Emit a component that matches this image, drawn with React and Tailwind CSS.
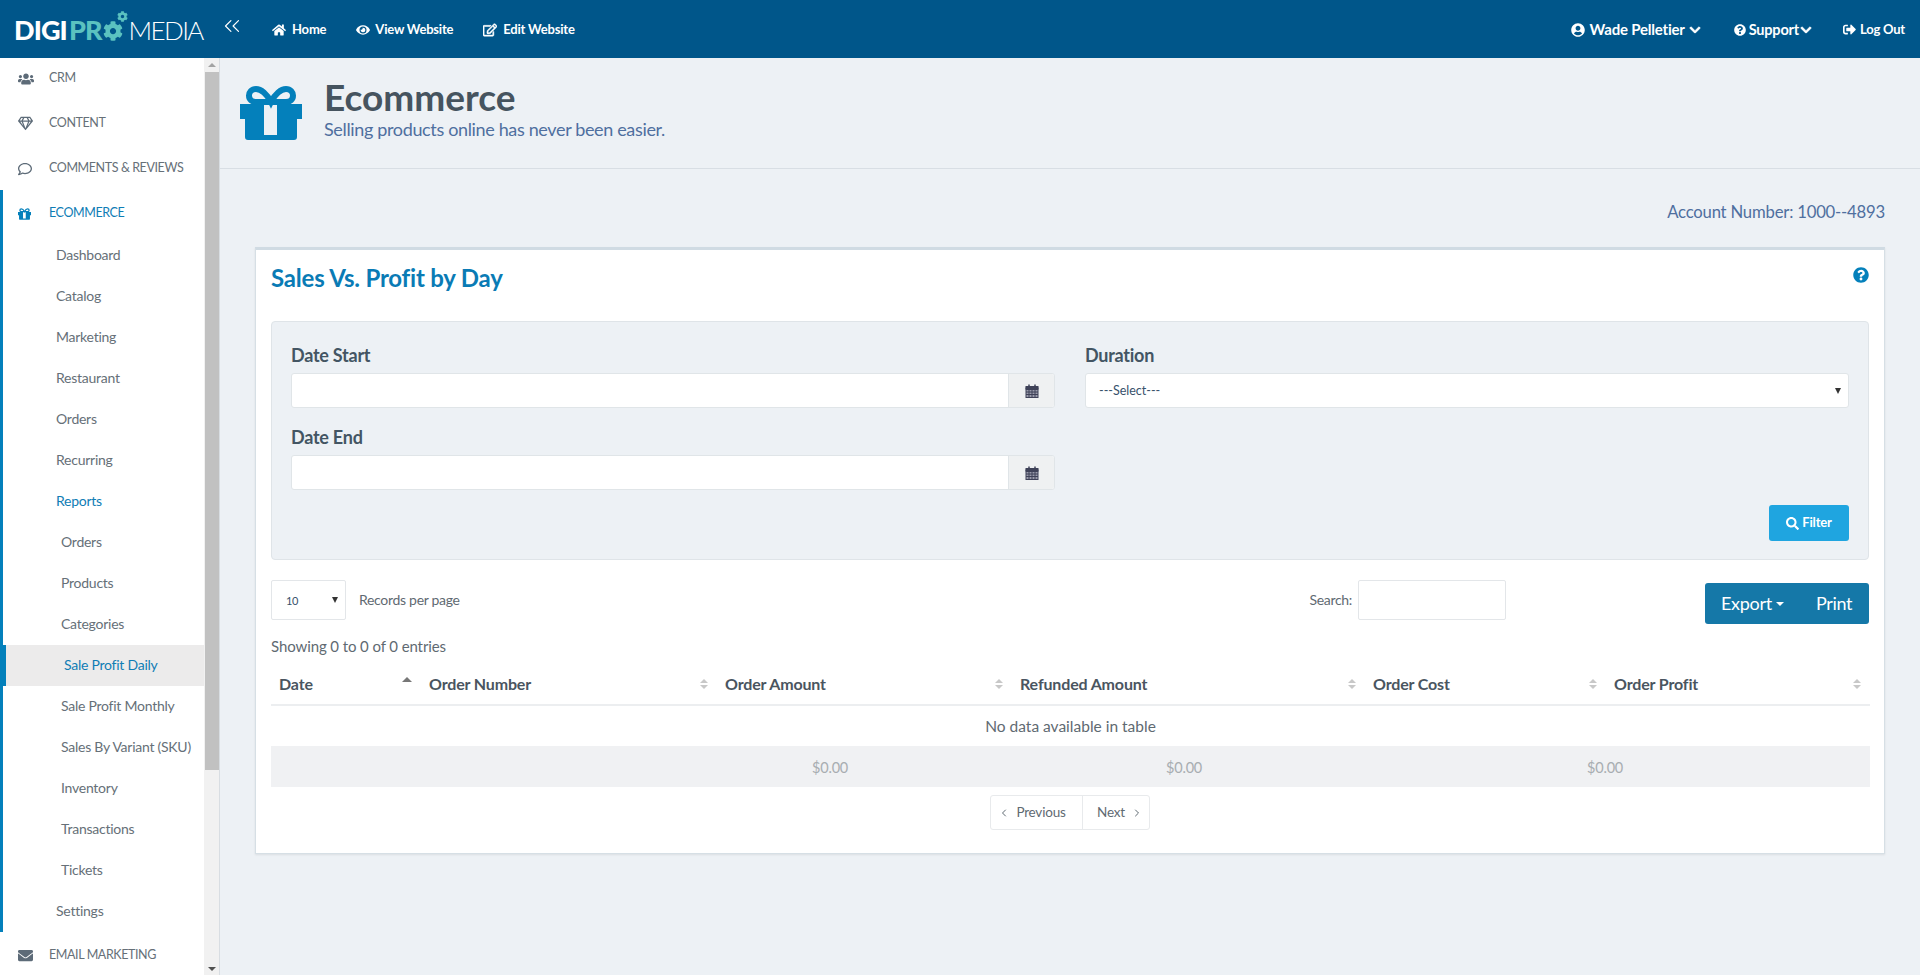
import React from 'react';
import { ChevronsLeft, ChevronLeft, ChevronRight } from 'lucide-react';
import {
  FaHome, FaEye, FaRegEdit, FaUserCircle, FaChevronDown, FaQuestionCircle, FaSignOutAlt,
  FaUsers, FaRegGem, FaRegComment, FaEnvelope, FaSearch, FaCog,
} from 'react-icons/fa';

const GiftIcon = ({ className }) => (
  <svg viewBox="0 0 62 54" className={`shrink-0 ${className}`}>
    <path className="fill-[#0480bb]" d="M0 18H24V49H37V18H62V33H57V51a3 3 0 0 1-3 3H8a3 3 0 0 1-3-3V33H0Z" />
    <path className="fill-none stroke-[#0480bb]" strokeWidth="6" d="M31 16C27 8 21 3 16 3C11.500 3 9 6.500 9 9.500C9 13.500 12 16 16 16H46C50 16 53 13.500 53 9.500C53 6.500 50.500 3 46 3C41 3 35 8 31 16Z" />
  </svg>
);

const CalendarIcon = () => (
  <svg viewBox="0 0 14 14" className="w-[14px] h-[14px] fill-none stroke-[#3f4258]" strokeWidth="1">
    <rect x="1" y="2.500" width="12" height="11" fill="#9a9bab" strokeWidth="1" />
    <path d="M1 3.500H13V5.500H1Z" fill="#3f4258" />
    <path d="M4 5.500V13.500M7 5.500V13.500M10 5.500V13.500M1 8H13M1 10.500H13" stroke="#3f4258" />
    <path d="M4 .5V3.500M10 .5V3.500" strokeWidth="1.500" />
  </svg>
);

const SortIcon = ({ active }) => (
  active ? (
    <span className="self-start mt-[13px] w-0 h-0 border-x-[5px] border-x-transparent border-b-[5px] border-b-[#777]" />
  ) : (
    <span className="flex flex-col gap-[2px] items-center">
      <span className="w-0 h-0 border-x-[4px] border-x-transparent border-b-[4px] border-b-[#c8c8c8]" />
      <span className="w-0 h-0 border-x-[4px] border-x-transparent border-t-[4px] border-t-[#c8c8c8]" />
    </span>
  )
);

const TopRow = ({ icon, label, blue }) => (
  <div className={`h-[45px] pt-[2px] flex items-center text-[12.5px] tracking-[-0.4px] ${blue ? 'text-[#0f7db5]' : 'text-[#667078]'}`}>
    <span className={`w-[49px] pl-[18px] flex ${blue ? 'text-[#0480bb]' : 'text-[#5d6b78]'}`}>{icon}</span>
    {label}
  </div>
);

const SubRow = ({ label, pad, active, blue }) => (
  <div className={`h-[41px] pb-[3px] flex items-center text-[14px] tracking-[-0.25px] ${pad} ${active ? 'bg-[#ecebeb] border-l-[3px] border-[#0480bb] text-[#0f7db5]' : ''} ${blue ? 'text-[#0f7db5]' : ''} ${!active && !blue ? 'text-[#667078]' : ''}`}>
    {label}
  </div>
);

const Sidebar = () => (
  <aside className="w-[220px] shrink-0 flex border-r border-[#d8dde2] bg-white overflow-hidden">
    <div className="w-[204px] -mt-[3px]">
      <TopRow icon={<FaUsers size={16} />} label="CRM" />
      <TopRow icon={<FaRegGem size={15} />} label="CONTENT" />
      <TopRow icon={<FaRegComment size={14} />} label="COMMENTS & REVIEWS" />
      <div className="border-l-[3px] border-[#0480bb]">
        <div className="-ml-[3px]">
          <TopRow icon={<GiftIcon className="w-[13px] h-[12px]" />} label="ECOMMERCE" blue />
        </div>
        <SubRow label="Dashboard" pad="pl-[53px]" />
        <SubRow label="Catalog" pad="pl-[53px]" />
        <SubRow label="Marketing" pad="pl-[53px]" />
        <SubRow label="Restaurant" pad="pl-[53px]" />
        <SubRow label="Orders" pad="pl-[53px]" />
        <SubRow label="Recurring" pad="pl-[53px]" />
        <SubRow label="Reports" pad="pl-[53px]" blue />
        <SubRow label="Orders" pad="pl-[58px]" />
        <SubRow label="Products" pad="pl-[58px]" />
        <SubRow label="Categories" pad="pl-[58px]" />
        <SubRow label="Sale Profit Daily" pad="pl-[58px]" active />
        <SubRow label="Sale Profit Monthly" pad="pl-[58px]" />
        <SubRow label="Sales By Variant (SKU)" pad="pl-[58px]" />
        <SubRow label="Inventory" pad="pl-[58px]" />
        <SubRow label="Transactions" pad="pl-[58px]" />
        <SubRow label="Tickets" pad="pl-[58px]" />
        <SubRow label="Settings" pad="pl-[53px]" />
      </div>
      <TopRow icon={<FaEnvelope size={15} />} label="EMAIL MARKETING" />
    </div>
    {/* scrollbar */}
    <div className="w-[15px] bg-[#f1f1f1] flex flex-col items-center">
      <div className="h-[14px] flex items-center">
        <span className="w-0 h-0 border-x-[4px] border-x-transparent border-b-[4px] border-b-[#a3a3a3]" />
      </div>
      <div className="w-[14px] h-[698px] bg-[#c1c1c1]" />
      <div className="flex-1 flex items-end pb-[4px]">
        <span className="w-0 h-0 border-x-[4px] border-x-transparent border-t-[4px] border-t-[#505050]" />
      </div>
    </div>
  </aside>
);

const Header = () => (
  <header className="h-[58px] shrink-0 pt-[1px] bg-[#00568a] flex items-center text-white text-[13px] font-bold tracking-[-0.2px]">
    <div className="w-[223px] shrink-0 pl-[14px] flex items-center leading-none">
      <span className="font-black text-[27px] tracking-[-0.9px]">DIGI</span>
      <span className="font-black text-[27px] tracking-[-0.9px] text-[#5bc2c0] ml-[2px]">PR</span>
      <span className="relative ml-[1px] mt-[3px] text-[#5bc2c0]">
        <FaCog size={20} />
        <FaCog size={11} className="absolute -top-[10px] left-[14px]" />
      </span>
      <span className="font-light text-[26px] ml-[6px] tracking-[-1.6px]">MEDIA</span>
    </div>
    <ChevronsLeft size={26} strokeWidth={1.1} className="-mt-[8px] -ml-[4px]" />
    <div className="flex items-center ml-[27px]">
      <FaHome size={14} className="mr-[6px]" />Home
    </div>
    <div className="flex items-center ml-[30px]">
      <FaEye size={14} className="mr-[5px]" />View Website
    </div>
    <div className="flex items-center ml-[30px]">
      <FaRegEdit size={14} stroke="currentColor" strokeWidth={20} className="mr-[6px]" />Edit Website
    </div>
    <div className="ml-auto flex items-center pr-[15px]">
      <FaUserCircle size={14} className="mr-[5px]" />
      <span className="text-[15px]">Wade Pelletier</span>
      <FaChevronDown size={12} stroke="currentColor" strokeWidth={30} className="ml-[4px]" />
      <FaQuestionCircle size={12} className="ml-[33px] mr-[3px]" />
      <span className="text-[14.5px]">Support</span>
      <FaChevronDown size={12} stroke="currentColor" strokeWidth={30} className="ml-[1px]" />
      <FaSignOutAlt size={13} className="ml-[31px] mr-[4px]" />Log Out
    </div>
  </header>
);

const DateField = ({ label, className }) => (
  <div className={className}>
    <div className="h-[24px] leading-[24px] text-[18px] font-bold text-[#435563] tracking-[-0.25px]">{label}</div>
    <div className="mt-[6px] h-[35px] flex rounded-[3px] border border-[#e0e5e8] bg-white overflow-hidden">
      <input className="flex-1 min-w-0 outline-none" />
      <div className="w-[46px] bg-[#eff1f2] border-l border-[#e0e5e8] flex items-center justify-center">
        <CalendarIcon />
      </div>
    </div>
  </div>
);

const columns = [
  { label: 'Date', width: 'w-[150px]', active: true },
  { label: 'Order Number', width: 'w-[296px]' },
  { label: 'Order Amount', width: 'w-[295px]' },
  { label: 'Refunded Amount', width: 'w-[353px]' },
  { label: 'Order Cost', width: 'w-[241px]' },
  { label: 'Order Profit', width: 'w-[264px]' },
];

const ReportTable = () => (
  <table className="mt-[7px] w-full table-fixed border-collapse">
    <thead>
      <tr className="border-b-2 border-[#eceef0]">
        {columns.map((col) => (
          <th key={col.label} className={`${col.width} h-[40px] p-0 font-normal`}>
            <div className="flex items-center justify-between pl-[8px] pr-[9px] h-[40px] text-[16px] font-bold text-[#4a5560] tracking-[-0.15px]">
              {col.label}
              <SortIcon active={col.active} />
            </div>
          </th>
        ))}
      </tr>
    </thead>
    <tbody>
      <tr>
        <td colSpan={6} className="h-[41px] pt-[1px] text-center text-[15.5px] text-[#5f6a72]">No data available in table</td>
      </tr>
    </tbody>
    <tfoot>
      <tr>
        <td colSpan={6} className="h-[41px] pt-[2px] bg-[#f0f1f3] text-[14.5px] text-[#a8adb1] tracking-[-0.2px]">
          <div className="flex">
            <span className="w-[354px] ml-[541px]">$0.00</span>
            <span className="w-[421px]">$0.00</span>
            <span>$0.00</span>
          </div>
        </td>
      </tr>
    </tfoot>
  </table>
);

const ReportCard = () => (
  <section className="bg-white border border-[#d6dfe5] border-t-[3px] border-t-[#d0dbe3] pt-[9px] px-[15px] pb-[23px] shadow-[0_1px_2px_rgba(0,0,0,0.08)]">
    <div className="h-[36px] flex items-center justify-between">
      <h2 className="pt-[1px] text-[24px] font-bold text-[#0a7bb5] tracking-[-0.2px]">Sales Vs. Profit by Day</h2>
      <FaQuestionCircle size={16} className="text-[#0480bb] -mt-[5px]" />
    </div>

    <div className="mt-[26px] h-[239px] border border-[#dfe4e8] rounded-[4px] bg-[#edf1f5] pt-[21px] px-[19px]">
      <div className="grid grid-cols-2 gap-x-[30px]">
        <div>
          <DateField label="Date Start" />
          <DateField label="Date End" className="mt-[17px]" />
        </div>
        <div>
          <div className="h-[24px] leading-[24px] text-[18px] font-bold text-[#435563] tracking-[-0.25px]">Duration</div>
          <div className="mt-[6px] h-[35px] pl-[13px] pr-[7px] pt-[1px] flex items-center justify-between rounded-[3px] border border-[#e0e5e8] bg-white text-[12.5px] text-[#37516b]">
            ---Select---
            <span className="w-0 h-0 border-x-[3px] border-x-transparent border-t-[6px] border-t-[#333]" />
          </div>
        </div>
      </div>
      <div className="mt-[15px] flex justify-end">
        <button className="w-[80px] h-[36px] rounded-[3px] bg-[#1fa5e0] text-white text-[13px] font-bold flex items-center justify-center gap-[3px] tracking-[-0.2px]">
          <FaSearch size={13} />Filter
        </button>
      </div>
    </div>

    <div className="mt-[20px] flex items-start text-[#5f6a72] text-[14px] tracking-[-0.3px]">
      <div className="w-[75px] h-[40px] pl-[14px] pr-[7px] pt-[2px] border border-[#e3e6e9] rounded-[2px] flex items-center justify-between text-[11px] text-[#37516b]">
        10
        <span className="-mt-[2px] w-0 h-0 border-x-[3px] border-x-transparent border-t-[6px] border-t-[#333]" />
      </div>
      <span className="ml-[13px] h-[38px] flex items-center">Records per page</span>
      <span className="ml-auto mr-[6px] h-[38px] flex items-center">Search:</span>
      <input className="w-[148px] h-[40px] border border-[#e3e6e9] rounded-[2px] outline-none" />
      <div className="ml-[199px] mt-[3px] w-[164px] h-[41px] rounded-[3px] bg-[#1578a8] text-white text-[18px] flex items-center pl-[16px] tracking-[-0.3px]">
        Export
        <span className="ml-[4px] w-0 h-0 border-x-[4px] border-x-transparent border-t-[4px] border-t-white" />
        <span className="ml-[32px]">Print</span>
      </div>
    </div>

    <div className="mt-[11px] h-[22px] leading-[22px] text-[15px] text-[#5f6a72] tracking-[-0.1px]">Showing 0 to 0 of 0 entries</div>

    <ReportTable />

    <div className="mt-[8px] flex justify-center">
      <div className="h-[35px] flex border border-[#e8eaec] rounded-[3px] text-[13.5px] text-[#5f6a72] tracking-[-0.2px]">
        <div className="w-[92px] pr-[9px] flex items-center justify-center gap-[6px] border-r border-[#e8eaec]">
          <ChevronLeft size={12} />Previous
        </div>
        <div className="w-[66px] pl-[8px] flex items-center justify-center gap-[6px]">
          Next<ChevronRight size={12} />
        </div>
      </div>
    </div>
  </section>
);

export default function App() {
  return (
    <div className="h-screen flex flex-col overflow-hidden font-['Lato',sans-serif]">
      <Header />
      <div className="flex-1 min-h-0 flex">
        <Sidebar />
        <main className="flex-1 min-w-0 bg-[#edf1f5]">
          <div className="h-[111px] border-b border-[#d8dee4] pl-[20px] flex items-center gap-[22px]">
            <GiftIcon className="w-[62px] h-[54px]" />
            <div className="-mt-[11px]">
              <h1 className="text-[37px] leading-[44px] font-bold text-[#46545f]">Ecommerce</h1>
              <p className="-mt-[1px] text-[18px] leading-[22px] text-[#4f6f9f] tracking-[-0.35px]">Selling products online has never been easier.</p>
            </div>
          </div>
          <div className="pt-[32px] pl-[35px] pr-[35px]">
            <div className="h-[22px] leading-[22px] text-right text-[16.7px] text-[#4f6f9f] tracking-[-0.2px]">Account Number: 1000--4893</div>
            <div className="mt-[24px]">
              <ReportCard />
            </div>
          </div>
        </main>
      </div>
    </div>
  );
}
